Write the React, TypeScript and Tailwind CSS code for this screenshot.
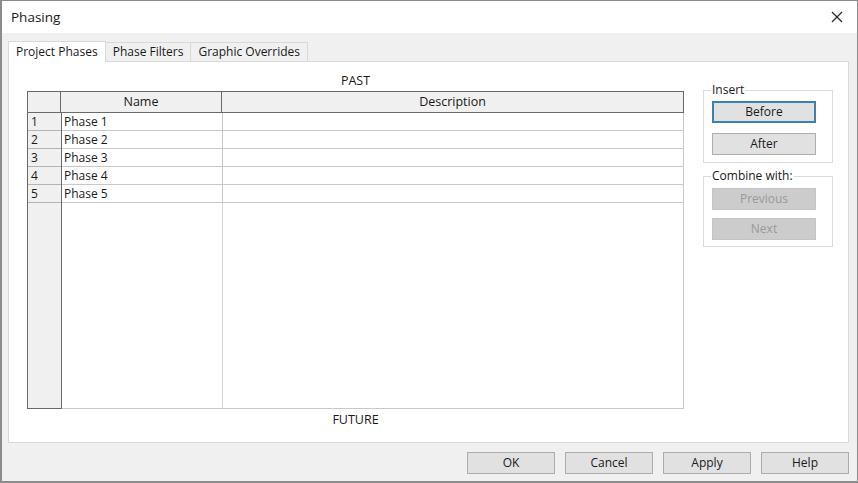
import React from "react";

const font = { fontFamily: '"Open Sans", "Noto Sans", sans-serif' };

function Btn({ label, primary, disabled }: { label: string; primary?: boolean; disabled?: boolean }) {
  if (disabled) {
    return (
      <div className="w-[104px] h-[22px] flex items-center justify-center bg-[#cccccc] border border-[#c4c4c4] text-[12px] text-[#9a9a9a]">
        {label}
      </div>
    );
  }
  return (
    <div
      className={
        "w-[104px] h-[22px] flex items-center justify-center bg-[#e1e1e1] text-[12px] text-[#1a1a1a] " +
        (primary ? "border-2 border-[#3c7fb1]" : "border border-[#adadad]")
      }
    >
      {label}
    </div>
  );
}

function FooterBtn({ label }: { label: string }) {
  return (
    <div className="w-[88px] h-[22px] flex items-center justify-center bg-[#e1e1e1] border border-[#adadad] text-[12px] text-[#1a1a1a]">
      {label}
    </div>
  );
}

export default function App() {
  const phases = ["Phase 1", "Phase 2", "Phase 3", "Phase 4", "Phase 5"];
  return (
    <div style={font} className="w-[858px] h-[483px] bg-[#f0f0f0] border-l-2 border-b-2 border-r border-t border-[#8c8c8c] flex flex-col text-[#1a1a1a] overflow-hidden">
      {/* Title bar */}
      <div className="h-[32px] bg-white flex items-center justify-between pl-[9px] pr-[14px] shrink-0">
        <span className="text-[13.5px]">Phasing</span>
        <svg width="12" height="12" viewBox="0 0 12 12">
          <line x1="1" y1="1" x2="11" y2="11" stroke="#2a2a2a" strokeWidth="1.2" />
          <line x1="11" y1="1" x2="1" y2="11" stroke="#2a2a2a" strokeWidth="1.2" />
        </svg>
      </div>

      {/* Body */}
      <div className="flex-1 flex flex-col pl-[6px] pr-[8px] pt-[7px]">
        {/* Tabs */}
        <div className="flex items-end h-[21px] shrink-0">
          <div className="h-[21px] px-[7px] bg-white border border-b-0 border-[#d9d9d9] flex items-center text-[12px] relative -mb-px z-10">
            Project Phases
          </div>
          <div className="h-[19px] px-[7px] bg-[#f0f0f0] border border-l-0 border-b-0 border-[#d9d9d9] flex items-center text-[12px]">
            Phase Filters
          </div>
          <div className="h-[19px] px-[7px] bg-[#f0f0f0] border border-l-0 border-b-0 border-[#d9d9d9] flex items-center text-[12px]">
            Graphic Overrides
          </div>
        </div>

        {/* Panel */}
        <div className="h-[382px] bg-white border border-[#d9d9d9] flex shrink-0">
          {/* Table area */}
          <div className="flex flex-col pl-[18px] pt-[9px]">
            <div className="h-[20px] flex items-center justify-center text-[12.5px]">PAST</div>
            <div className="w-[657px] h-[318px] flex flex-col">
              <div className="h-[22px] flex border border-[#6a6a6a] bg-[#f0f0f0] shrink-0 text-[12.5px]">
                <div className="w-[33px] border-r border-[#6a6a6a]" />
                <div className="w-[161px] border-r border-[#6a6a6a] flex items-center justify-center">Name</div>
                <div className="flex-1 flex items-center justify-center">Description</div>
              </div>
              <div className="flex-1 flex">
                <div className="w-[35px] bg-[#f0f0f0] border-l border-r border-b border-[#6a6a6a] flex flex-col">
                  {phases.map((_, i) => (
                    <div key={i} className="h-[18px] border-b border-[#b4b4b4] flex items-center pl-[3px] text-[12px]">
                      {i + 1}
                    </div>
                  ))}
                </div>
                <div className="flex-1 flex flex-col border-r border-b border-[#c8c8c8]">
                  {phases.map((p) => (
                    <div key={p} className="h-[18px] flex border-b border-[#c8c8c8]">
                      <div className="w-[161px] border-r border-[#c8c8c8] flex items-center pl-[2px] text-[12px]">{p}</div>
                      <div className="flex-1" />
                    </div>
                  ))}
                  <div className="flex-1 flex">
                    <div className="w-[161px] border-r border-[#d4d4d4]" />
                  </div>
                </div>
              </div>
            </div>
            <div className="h-[22px] flex items-center justify-center text-[12.5px]">FUTURE</div>
          </div>

          {/* Right groups */}
          <div className="flex flex-col pl-[19px] pt-[19px] gap-[4px]">
            <fieldset className="w-[130px] h-[82px] border border-[#dcdcdc] pl-[8px] flex flex-col">
              <legend className="text-[12px] px-[1px] -ml-[1px]">Insert</legend>
              <div className="flex flex-col gap-[10px] pt-[2px]">
                <Btn label="Before" primary />
                <Btn label="After" />
              </div>
            </fieldset>
            <fieldset className="w-[130px] h-[80px] border border-[#dcdcdc] pl-[8px] flex flex-col">
              <legend className="text-[12px] px-[1px] -ml-[1px]">Combine with:</legend>
              <div className="flex flex-col gap-[8px] pt-[3px]">
                <Btn label="Previous" disabled />
                <Btn label="Next" disabled />
              </div>
            </fieldset>
          </div>
        </div>

        {/* Footer */}
        <div className="flex-1 flex justify-end items-start pt-[9px] gap-[10px] pr-[0px]">
          <FooterBtn label="OK" />
          <FooterBtn label="Cancel" />
          <FooterBtn label="Apply" />
          <FooterBtn label="Help" />
        </div>
      </div>
    </div>
  );
}
